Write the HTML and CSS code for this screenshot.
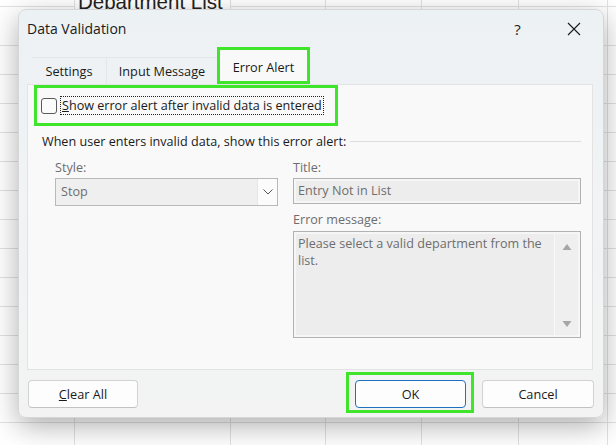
FILE: index.html
```html
<!DOCTYPE html>
<html lang="en">
<head>
    <meta charset="UTF-8">
    <title>Data Validation</title>
    <link rel="stylesheet" href="styles.css">
</head>
<body>

<div class="sheet">
    <div class="col col-a"></div>
    <div class="col col-b"><div class="cell-title">Department List</div></div>
    <div class="col col-c"></div>
    <div class="col col-d"></div>
    <div class="col col-e"></div>
    <div class="col col-f"></div>
    <div class="col col-g"></div>
</div>

<div class="dialog">
    <div class="titlebar">
        <span class="title">Data Validation</span>
        <span class="help">?</span>
        <span class="close">
            <svg width="14" height="14" viewBox="0 0 14 14"><path d="M1 1 L13 13 M13 1 L1 13" stroke="#1a1a1a" stroke-width="1.1" fill="none"/></svg>
        </span>
    </div>

    <div class="tabs">
        <div class="tab tab-settings">Settings</div>
        <div class="tab tab-input">Input Message</div>
        <div class="tab tab-active">Error Alert</div>
    </div>

    <div class="panel">
        <div class="check-row">
            <span class="checkbox"></span>
            <span class="check-label"><u>S</u>how error alert after invalid data is entered</span>
        </div>

        <div class="group-title">When user enters invalid data, show this error alert:</div>

        <div class="fields">
            <div class="field-col left">
                <div class="label">Style:</div>
                <div class="combo">
                    <span class="combo-text">Stop</span>
                    <span class="combo-btn">
                        <svg width="10" height="6" viewBox="0 0 10 6"><path d="M0.5 0.5 L5 5 L9.5 0.5" stroke="#555" stroke-width="1" fill="none"/></svg>
                    </span>
                </div>
            </div>
            <div class="field-col right">
                <div class="label">Title:</div>
                <div class="input">Entry Not in List</div>
                <div class="label label-msg">Error message:</div>
                <div class="textarea">
                    <div class="textarea-text">Please select a valid department from the list.</div>
                    <div class="scroll">
                        <svg width="10" height="8" viewBox="0 0 10 8"><path d="M5 1 L9.5 7 L0.5 7 Z" fill="#a6a6a6"/></svg>
                        <svg width="10" height="8" viewBox="0 0 10 8"><path d="M0.5 1 L9.5 1 L5 7 Z" fill="#a6a6a6"/></svg>
                    </div>
                </div>
            </div>
        </div>
    </div>

    <div class="buttons">
        <button class="btn btn-clear"><u>C</u>lear All</button>
        <div class="spacer"></div>
        <div class="ok-mark"><button class="btn btn-ok">OK</button></div>
        <button class="btn btn-cancel">Cancel</button>
    </div>
</div>

</body>
</html>
```

FILE: styles.css
```css
* {
    margin: 0;
    padding: 0;
    box-sizing: border-box;
}
body {
    width: 616px;
    height: 445px;
    overflow: hidden;
    position: relative;
    background: #fff;
    font-family: "Open Sans", "Noto Sans", sans-serif;
    color: #1a1a1a;
}

/* spreadsheet behind the dialog */
.sheet {
    display: grid;
    grid-template-columns: 75px 156px 95px 96px 97px 89px 1fr;
    height: 445px;
    background: repeating-linear-gradient(to bottom, transparent 0 28px, #e1e1e1 28px 29px);
    background-position: 0 17px;
}
.col {
    border-right: 1px solid #e1e1e1;
}
.col-g {
    border-right: none;
}
.cell-title {
    font-family: "Liberation Sans", Arial, sans-serif;
    font-size: 20.5px;
    line-height: 24px;
    margin-top: -10px;
    padding-left: 3px;
    color: #222;
    background: #fff;
}

/* dialog window */
.dialog {
    position: absolute;
    left: 18px;
    top: 9px;
    width: 586px;
    height: 409px;
    border-radius: 8px;
    border: 1px solid #d4d6d8;
    background: linear-gradient(to bottom, #ecf1f4 0%, #f1f3f4 45%, #f3f3f3 100%);
    box-shadow: 0 8px 28px rgba(0, 0, 0, 0.32);
    display: flex;
    flex-direction: column;
}
.titlebar {
    height: 37px;
    display: flex;
    align-items: center;
    padding-left: 8px;
}
.title {
    font-size: 14px;
    flex: 1;
}
.help {
    width: 67px;
    text-align: center;
    font-size: 15px;
}
.close {
    width: 46px;
    margin-right: 6px;
    display: flex;
    justify-content: center;
}

.tabs {
    height: 37px;
    display: flex;
    align-items: flex-end;
    padding-left: 13px;
    font-size: 12.7px;
}
.tab {
    height: 27px;
    line-height: 27px;
    text-align: center;
    border-top: 1px solid #e4e6e8;
}
.tab-settings {
    width: 75px;
    border-right: 1px solid #e4e6e8;
}
.tab-input {
    width: 110px;
}
.tab-active {
    width: 93px;
    height: 37px;
    line-height: 22px;
    padding-top: 6px;
    background: #f9f9f9;
    border: 3px solid #3ee52a;
}

.panel {
    margin-left: 8px;
    width: 566px;
    height: 286px;
    background: #f9f9f9;
    border: 1px solid #e3e3e3;
    font-size: 12.6px;
}
.check-row {
    margin-left: 6px;
    width: 304px;
    height: 41px;
    border: 3px solid #3ee52a;
    display: flex;
    align-items: center;
    padding-left: 4px;
}
.checkbox {
    width: 16px;
    height: 16px;
    border: 1px solid #5a5a5a;
    border-radius: 3px;
    background: #fbfbfb;
    margin-right: 3px;
}
.check-label {
    border: 1px dotted #222;
    padding: 0 1px;
    line-height: 17px;
}
.group-title {
    display: flex;
    align-items: center;
    margin: 5px 11px 0 14px;
    height: 20px;
    white-space: nowrap;
}
.group-title::after {
    content: "";
    flex: 1;
    height: 1px;
    background: #dcdcdc;
    margin-left: 4px;
}

.fields {
    display: flex;
    gap: 15px;
    margin: 8px 0 0 27px;
}
.field-col.left {
    width: 223px;
}
.field-col.right {
    width: 288px;
}
.label {
    color: #6d6d6d;
    line-height: 18px;
    margin-bottom: 1px;
}
.label-msg {
    margin-top: 7px;
    margin-bottom: 2px;
}
.combo {
    height: 28px;
    display: flex;
    border: 1px solid #b9b9b9;
    background: #efefef;
}
.combo-text {
    flex: 1;
    color: #6d6d6d;
    line-height: 26px;
    padding-left: 5px;
}
.combo-btn {
    width: 20px;
    background: #fbfbfb;
    border-left: 1px solid #e6e6e6;
    display: flex;
    align-items: center;
    justify-content: center;
}
.input {
    height: 26px;
    border: 1px solid #b2b2b2;
    background: #ededed;
    box-shadow: inset 0 0 0 2px #f6f6f6;
    color: #6d6d6d;
    line-height: 24px;
    padding-left: 4px;
}
.textarea {
    height: 107px;
    border: 1px solid #b2b2b2;
    background: #ededed;
    box-shadow: inset 0 0 0 2px #f6f6f6;
    display: flex;
}
.textarea-text {
    flex: 1;
    color: #6d6d6d;
    line-height: 17px;
    padding: 3px 4px;
}
.scroll {
    width: 24px;
    border-left: 1px solid #f8f8f8;
    background: #efefef;
    margin: 2px 2px 2px 0;
    display: flex;
    flex-direction: column;
    justify-content: space-between;
    align-items: center;
    padding: 9px 0 7px;
}

.buttons {
    height: 28px;
    margin: 10px 9px 0 9px;
    display: flex;
    align-items: flex-start;
}
.spacer {
    flex: 1;
}
.btn {
    height: 28px;
    font-family: "Open Sans", "Noto Sans", sans-serif;
    font-size: 12.7px;
    color: #1a1a1a;
    background: #fdfdfd;
    border: 1px solid #d2d2d2;
    border-bottom-color: #c2c2c2;
    border-radius: 4px;
}
.btn-clear {
    width: 110px;
}
.ok-mark {
    margin-top: -8px;
    height: 41px;
    border: 3px solid #3ee52a;
    padding: 5px 5px 2px 6px;
    margin-right: 8px;
}
.btn-ok {
    width: 111px;
    border: 1px solid #1f6fbf;
}
.btn-cancel {
    width: 112px;
}
```
